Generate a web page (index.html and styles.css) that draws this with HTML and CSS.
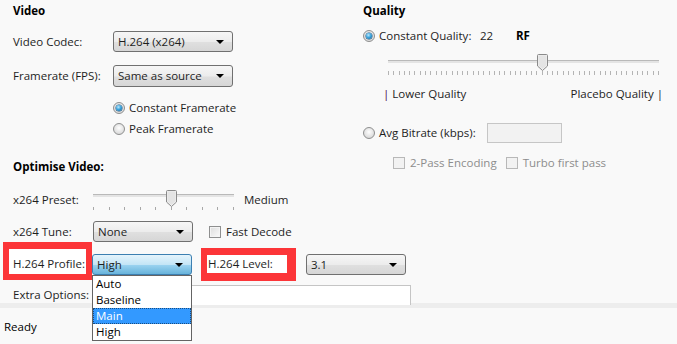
FILE: index.html
```html
<!DOCTYPE html>
<html lang="en">
<head>
    <meta charset="UTF-8">
    <title>Video Settings</title>
    <link rel="stylesheet" href="styles.css">
</head>
<body>
    <div class="main">
        <div class="col-left">
            <div class="section-title">Video</div>

            <div class="row row-codec">
                <span class="label wide">Video Codec:</span>
                <div class="combo w-codec"><span>H.264 (x264)</span><i class="arrow"></i></div>
            </div>

            <div class="row row-fps">
                <span class="label wide">Framerate (FPS):</span>
                <div class="combo w-codec"><span>Same as source</span><i class="arrow"></i></div>
            </div>

            <div class="row row-radio1 indent">
                <span class="radio checked"></span><span>Constant Framerate</span>
            </div>
            <div class="row row-radio2 indent">
                <span class="radio"></span><span>Peak Framerate</span>
            </div>

            <div class="section-title row-optimise">Optimise Video:</div>

            <div class="row row-preset">
                <span class="label">x264 Preset:</span>
                <div class="slider preset-slider">
                    <div class="track"></div>
                    <div class="ticks preset-ticks"></div>
                    <svg class="thumb" style="left: 73px" width="11" height="17" viewBox="0 0 11 17">
                        <path d="M1.5 0.5 H9.5 Q10.5 0.5 10.5 1.5 V12 L5.5 16.5 L0.5 12 V1.5 Q0.5 0.5 1.5 0.5 Z" fill="#f0f0f0" stroke="#8a8a8a"/>
                        <path d="M1.5 1.5 H9.5 V11.5 L5.5 15 L1.5 11.5 Z" fill="#e4e4e4"/>
                    </svg>
                </div>
                <span class="preset-value">Medium</span>
            </div>

            <div class="row row-tune">
                <span class="label">x264 Tune:</span>
                <div class="combo w-small"><span>None</span><i class="arrow"></i></div>
                <span class="check"></span><span>Fast Decode</span>
            </div>

            <div class="row row-profile">
                <span class="mark mark-profile">H.264 Profile:</span>
                <div class="combo w-small active">
                    <span>High</span><i class="arrow"></i>
                    <ul class="dropdown">
                        <li>Auto</li>
                        <li>Baseline</li>
                        <li class="selected">Main</li>
                        <li>High</li>
                    </ul>
                </div>
                <span class="mark mark-level">H.264 Level:</span>
                <div class="combo w-small"><span>3.1</span><i class="arrow"></i></div>
            </div>

            <div class="row row-extra">
                <span class="label">Extra Options:</span>
                <div class="textarea"></div>
            </div>
        </div>

        <div class="col-right">
            <div class="section-title">Quality</div>

            <div class="row row-cq">
                <span class="radio checked"></span>
                <span class="cq-label">Constant Quality:</span>
                <span class="cq-value">22</span>
                <span class="rf">RF</span>
            </div>

            <div class="slider quality-slider">
                <div class="track"></div>
                <div class="ticks quality-ticks"></div>
                <svg class="thumb" style="left: 149px" width="11" height="17" viewBox="0 0 11 17">
                    <path d="M1.5 0.5 H9.5 Q10.5 0.5 10.5 1.5 V12 L5.5 16.5 L0.5 12 V1.5 Q0.5 0.5 1.5 0.5 Z" fill="#f0f0f0" stroke="#8a8a8a"/>
                    <path d="M1.5 1.5 H9.5 V11.5 L5.5 15 L1.5 11.5 Z" fill="#e4e4e4"/>
                </svg>
            </div>

            <div class="row row-scale">
                <span><span class="pipe">|</span> Lower Quality</span>
                <span>Placebo Quality |</span>
            </div>

            <div class="row row-abr">
                <span class="radio"></span>
                <span class="abr-label">Avg Bitrate (kbps):</span>
                <div class="textbox disabled"></div>
            </div>

            <div class="row row-pass disabled-text">
                <span class="check disabled"></span><span class="pass-label">2-Pass Encoding</span>
                <span class="check disabled"></span><span>Turbo first pass</span>
            </div>
        </div>
    </div>

    <div class="status-sep"></div>
    <div class="status">Ready</div>
</body>
</html>
```

FILE: styles.css
```css
* {
    box-sizing: border-box;
}

body {
    margin: 0;
    background-color: #f9f9f9;
    font-family: 'Open Sans', 'Noto Sans', sans-serif;
    font-size: 11.5px;
    line-height: 16px;
    color: #1e1e1e;
    width: 677px;
    height: 344px;
    overflow: hidden;
}

.main {
    display: flex;
    height: 303px;
}

.col-left {
    width: 363px;
    padding-left: 13px;
    flex-shrink: 0;
}

.col-right {
    width: 314px;
}

.section-title {
    font-weight: 700;
    height: 20px;
    line-height: 22px;
    color: #000;
}

.row {
    display: flex;
    align-items: center;
    white-space: nowrap;
}

.label {
    width: 80px;
    flex-shrink: 0;
}

.label.wide {
    width: 100px;
}

.indent {
    padding-left: 100px;
}

/* left column rows */
.row-codec { margin-top: 11px; height: 21px; }
.row-fps { margin-top: 13px; height: 22px; }
.row-radio1 { margin-top: 13px; height: 16px; }
.row-radio2 { margin-top: 5px; height: 16px; }
.row-optimise { margin-top: 19px; }
.row-preset { margin-top: 12px; height: 24px; }
.row-tune { margin-top: 9px; height: 21px; }
.row-profile { margin-top: 12px; height: 21px; align-items: flex-start; }
.row-extra { margin-top: 10px; height: 20px; }

/* combo boxes */
.combo {
    position: relative;
    display: flex;
    align-items: center;
    height: 100%;
    border: 1px solid #707070;
    border-radius: 3px;
    padding-left: 4px;
    background: linear-gradient(#f6f6f6 0%, #ececec 50%, #dfdfdf 55%, #d6d6d6 100%);
    flex-shrink: 0;
}

.w-codec { width: 120px; }
.w-small { width: 100px; height: 21px; }

.combo .arrow {
    position: absolute;
    right: 8px;
    top: 8px;
    width: 0;
    height: 0;
    border-left: 4px solid transparent;
    border-right: 4px solid transparent;
    border-top: 4px solid #000;
}

.combo.active {
    border-color: #3c7fb1;
    background: linear-gradient(#e5f4fc 0%, #c4e5f6 50%, #98d1ef 55%, #68b3db 100%);
}

.dropdown {
    position: absolute;
    top: 20px;
    left: -1px;
    width: 100px;
    margin: 0;
    padding: 0;
    list-style: none;
    background-color: #fff;
    border: 1px solid #646464;
    z-index: 10;
}

.dropdown li {
    height: 16px;
    line-height: 16px;
    padding-left: 3px;
    color: #000;
}

.dropdown li.selected {
    background-color: #3399ff;
    color: #fff;
    outline: 1px dotted #1a4d80;
    outline-offset: -1px;
}

/* radio & check */
.radio {
    width: 12px;
    height: 12px;
    border-radius: 50%;
    border: 1px solid #8e8f8f;
    background: radial-gradient(circle at 50% 40%, #ffffff 0%, #e6e6e6 50%, #cfcfcf 100%);
    margin-right: 4px;
    flex-shrink: 0;
    position: relative;
}

.radio.checked::after {
    content: "";
    position: absolute;
    left: 2px;
    top: 2px;
    width: 6px;
    height: 6px;
    border-radius: 50%;
    background: radial-gradient(circle at 40% 35%, #bfe8fb 0%, #3ba5de 45%, #0b5a92 100%);
    box-shadow: 0 0 0 0.5px #1b4f7a;
}

.check {
    width: 12px;
    height: 12px;
    border: 1px solid #8e8f8f;
    background: linear-gradient(135deg, #dcdcdc, #fafafa);
    box-shadow: inset 0 0 0 1px #f4f4f4;
    margin-left: 16px;
    margin-right: 5px;
    flex-shrink: 0;
}

.check.disabled {
    border-color: #b8b8b8;
    background: #f2f2f2;
    box-shadow: none;
}

/* sliders */
.slider {
    position: relative;
    height: 24px;
    flex-shrink: 0;
}

.slider .track {
    position: absolute;
    left: 0;
    right: 0;
    top: 6px;
    height: 3px;
    border-top: 1px solid #b9b9b9;
    background-color: #e4e4e4;
}

.slider .thumb {
    position: absolute;
    top: 2px;
}

.slider .ticks {
    position: absolute;
    left: 0;
    right: 0;
    top: 19px;
    height: 3px;
}

.preset-slider {
    width: 141px;
}

.preset-ticks {
    background: repeating-linear-gradient(to right, #a8a8a8 0 1px, transparent 1px 15.556px);
}

.preset-value {
    margin-left: 10px;
}

/* red annotation boxes */
.mark {
    background-color: #fff;
    border: 6px solid #fc3538;
    flex-shrink: 0;
}

.mark-profile {
    margin-left: -10px;
    margin-top: -12px;
    width: 89px;
    height: 38px;
    border-top-width: 7px;
    padding: 7px 0 0 4px;
}

.mark-level {
    margin-left: 9px;
    margin-right: 10px;
    margin-top: -6px;
    width: 95px;
    height: 33px;
    border-top-width: 7px;
    border-bottom-width: 8px;
    border-right-width: 9px;
    padding: 1px 0 0 1px;
}

.textarea {
    width: 318px;
    height: 20px;
    flex-shrink: 0;
    background-color: #fff;
    border: 1px solid #c5c5c5;
    border-bottom: none;
}

/* right column */
.row-cq { margin-top: 8px; height: 16px; }

.cq-label { width: 101px; }
.cq-value { width: 36px; }
.rf { font-weight: 700; color: #000; }

.quality-slider {
    margin-top: 8px;
    margin-left: 25px;
    width: 271px;
}

.quality-slider .track { top: 8px; }
.quality-slider .ticks { top: 19px; height: 4px; }

.quality-ticks {
    background: repeating-linear-gradient(to right, #b4b4b4 0 1px, transparent 1px 5.294px);
}

.row-scale {
    margin-top: 10px;
    margin-left: 20px;
    width: 280px;
    height: 16px;
    justify-content: space-between;
}

.pipe { color: #4a0a4a; }

.row-abr { margin-top: 21px; height: 20px; }
.abr-label { width: 108px; }

.textbox {
    width: 75px;
    height: 20px;
    border: 1px solid #b5b5b5;
    background-color: #fff;
}

.textbox.disabled {
    background-color: #f2f2f2;
    border-color: #c6c6c6;
}

.row-pass {
    margin-top: 12px;
    height: 16px;
    padding-left: 14px;
}

.disabled-text { color: #8d8d8d; }
.pass-label { margin-right: -7px; }

/* status bar */
.status-sep {
    height: 5px;
    background-color: #ededed;
}

.status {
    padding-left: 4px;
    height: 36px;
    line-height: 38px;
    color: #000;
}
```
